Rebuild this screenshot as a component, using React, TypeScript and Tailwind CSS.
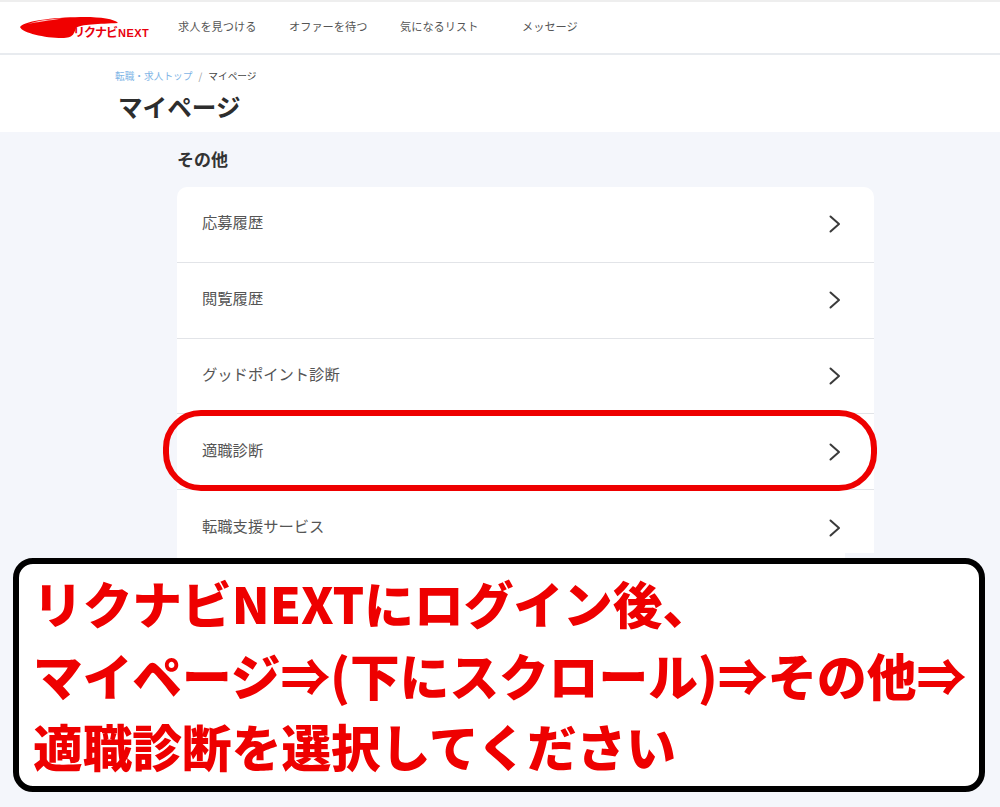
import React from 'react';

const JP = "font-['Noto_Sans_CJK_JP','Noto_Sans',sans-serif]";

const navItems = [
  { label: '求人を見つける', width: 'w-[111px]' },
  { label: 'オファーを待つ', width: 'w-[111px]' },
  { label: '気になるリスト', width: 'w-[122px]' },
  { label: 'メッセージ', width: 'w-[70px]' },
];

const menuItems = ['応募履歴', '閲覧履歴', 'グッドポイント診断', '適職診断', '転職支援サービス'];

function Logo() {
  return (
    <div className="relative w-[131px] h-[24px] shrink-0">
      <svg width="100" height="24" viewBox="0 0 100 24" className="absolute left-0 top-0">
        <path
          d="M0 11C5 4 40 1 65 1C80 1 95 3 98 7C80 8 60 8 56 12C54 17 54 22 42 22C25 22 2 17 0 11Z"
          fill="#f00000"
        />
        <path d="M8 8C16 5 28 3 42 2.5C30 4.5 17 6 8 8Z" fill="#ffc4c4" />
      </svg>
      <span className={`${JP} absolute left-[53px] top-[9px] text-[12px] leading-[14px] font-bold text-[#e8000d] tracking-[-1px] whitespace-nowrap`}>
        リクナビ
      </span>
      <span className="absolute left-[98px] top-[10px] font-['Liberation_Sans',sans-serif] text-[11px] leading-[14px] font-bold text-[#e8000d] tracking-[0.5px]">
        NEXT
      </span>
    </div>
  );
}

function Chevron() {
  return (
    <svg width="12" height="18" viewBox="0 0 12 18" fill="none" stroke="#3a3a3a" strokeWidth="2" strokeLinecap="round" strokeLinejoin="round">
      <path d="M1.5 1.5L10 9L1.5 16.5" />
    </svg>
  );
}

export default function App() {
  return (
    <div className={`${JP} relative w-[1000px] h-[807px] overflow-hidden bg-[#f4f6fb]`}>
      <header className="h-[55px] bg-white border-t-2 border-b-2 border-t-[#eeeeee] border-b-[#e8ebef] flex items-center pl-[20px]">
        <Logo />
        <nav className="flex items-center ml-[27px] mb-[2px] text-[11.2px] text-[#555555]">
          {navItems.map((item) => (
            <span key={item.label} className={`${item.width} whitespace-nowrap`}>
              {item.label}
            </span>
          ))}
        </nav>
      </header>

      <div className="h-[77px] bg-white pl-[115px] pt-[14px]">
        <p className="text-[9.7px] leading-[15px] flex gap-[6px]">
          <span className="text-[#7fb5e6]">転職・求人トップ</span>
          <span className="text-[#999999]">/</span>
          <span className="text-[#444444]">マイページ</span>
        </p>
        <h1 className="mt-[4px] ml-[3px] text-[24.6px] leading-[36px] font-bold text-[#2d2d2d]">マイページ</h1>
      </div>

      <main className="w-[697px] ml-[177px] pt-[15px]">
        <h2 className="text-[17px] leading-[24px] font-bold text-[#333333]">その他</h2>
        <ul className="mt-[16px] bg-white rounded-t-[10px]">
          {menuItems.map((label) => (
            <li
              key={label}
              className="h-[75.8px] pl-[25px] pr-[33px] flex items-center justify-between border-b border-[#e2e4e8] last:border-b-0 text-[15.3px] text-[#555555]"
            >
              <span className="pb-[5px]">{label}</span>
              <Chevron />
            </li>
          ))}
        </ul>
      </main>

      <div className="absolute left-[845px] top-[553px] w-[29px] h-[5px] bg-[#f4f6fb]" />

      <div className="absolute left-[163px] top-[410px] w-[714px] h-[81px] border-[6px] border-[#ee0000] rounded-[38px]" />

      <div className="absolute left-[13px] top-[558px] w-[972px] h-[234px] bg-white border-[6px] border-black rounded-[20px] pl-[14px] pt-[3px]">
        <div className="text-[49.7px] leading-[71.5px] font-black text-[#ee0000] whitespace-nowrap">
          <p>リクナビNEXTにログイン後、</p>
          <p>マイページ⇒(下にスクロール)⇒その他⇒</p>
          <p>適職診断を選択してください</p>
        </div>
      </div>
    </div>
  );
}
